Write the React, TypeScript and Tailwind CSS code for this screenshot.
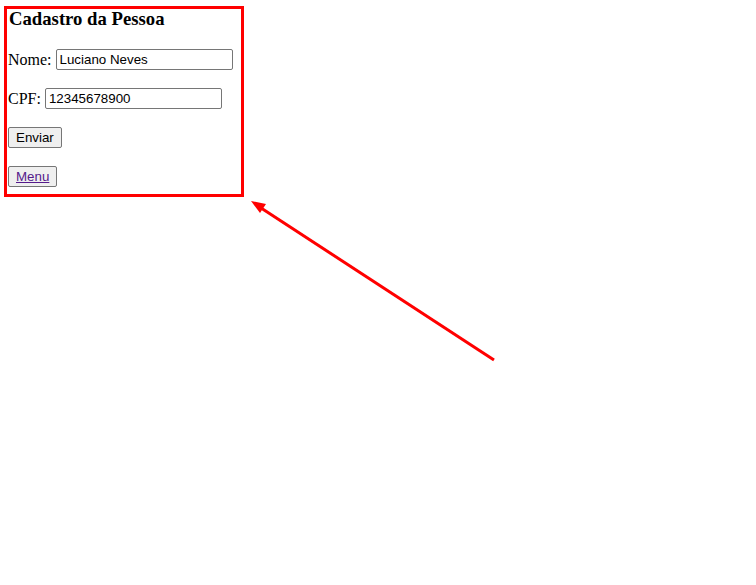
export default function App() {
  return (
    <div className="relative w-[756px] h-[585px] bg-white font-['Liberation_Serif',serif] text-[16px] text-black">
      {/* form content */}
      <div className="flex flex-col pl-[8px] pt-[8px]">
        <h3 className="text-[18.72px] font-bold leading-[22px] pl-[1px]">Cadastro da Pessoa</h3>
        <div className="mt-[19px] flex items-center h-[21px]">
          <label>Nome:&nbsp;</label>
          <input
            type="text"
            defaultValue="Luciano Neves"
            className="w-[177px] h-[21px] border border-[#767676] rounded-[2px] px-[3px] font-['Liberation_Sans',sans-serif] text-[13.33px] text-black outline-none"
          />
        </div>
        <div className="mt-[18px] flex items-center h-[21px]">
          <label>CPF:&nbsp;</label>
          <input
            type="text"
            defaultValue="12345678900"
            className="w-[177px] h-[21px] border border-[#767676] rounded-[2px] px-[3px] font-['Liberation_Sans',sans-serif] text-[13.33px] text-black outline-none"
          />
        </div>
        <div className="mt-[18px] flex h-[21px]">
          <button className="h-[21px] px-[7px] bg-[#efefef] border border-[#767676] rounded-[2px] font-['Liberation_Sans',sans-serif] text-[13.33px] text-black leading-none">
            Enviar
          </button>
        </div>
        <div className="mt-[18px] flex h-[21px]">
          <button className="h-[21px] px-[7px] bg-[#efefef] border border-[#767676] rounded-[2px] font-['Liberation_Serif',serif] text-[13.33px] leading-none">
            <a href="#" className="text-[#551a8b] underline font-['Liberation_Sans',sans-serif]">Menu</a>
          </button>
        </div>
      </div>

      {/* annotation box */}
      <div className="absolute left-[4px] top-[6px] w-[240px] h-[191px] border-[3px] border-[#ff0000]" />

      {/* annotation arrow */}
      <svg className="absolute left-0 top-0" width="756" height="585" viewBox="0 0 756 585">
        <line x1="494" y1="360" x2="258" y2="206" stroke="#ff0000" strokeWidth="3" />
        <polygon points="251,201 266,204 260,213" fill="#ff0000" />
      </svg>
    </div>
  );
}
